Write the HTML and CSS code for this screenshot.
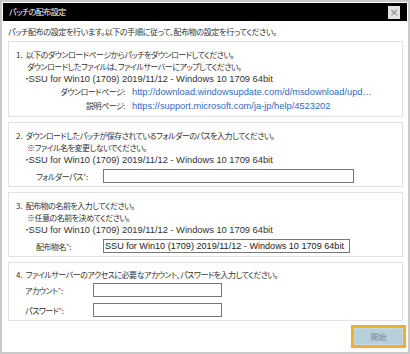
FILE: index.html
```html
<!doctype html>
<html>
<head>
    <title>パッチの配布設定</title>
    <link rel="stylesheet" href="styles.css">
</head>
<body>
    <div class="dialog">
        <div class="title-bar">
            <span>パッチの配布設定</span>
            <span class="close-btn">×</span>
        </div>
        <div class="content">
            <div class="intro">パッチ配布の設定を行います。以下の手順に従って、配布物の設定を行ってください。</div>

            <div class="step">
                <div class="line"><span class="num">1.</span>以下のダウンロードページからパッチをダウンロードしてください。</div>
                <div class="line note">ダウンロードしたファイルは、ファイルサーバーにアップしてください。</div>
                <div class="line item">・<span class="en">SSU for Win10 (1709) 2019/11/12 - Windows 10 1709 64bit</span></div>
                <div class="link-row">
                    <span class="link-label">ダウンロードページ:</span>
                    <a class="en" href="#">http://download.windowsupdate.com/d/msdownload/upd…</a>
                </div>
                <div class="link-row">
                    <span class="link-label">説明ページ:</span>
                    <a class="en" href="#">https://support.microsoft.com/ja-jp/help/4523202</a>
                </div>
            </div>

            <div class="step">
                <div class="line"><span class="num">2.</span>ダウンロードしたパッチが保存されているフォルダーのパスを入力してください。</div>
                <div class="line note">※ファイル名を変更しないでください。</div>
                <div class="line item">・<span class="en">SSU for Win10 (1709) 2019/11/12 - Windows 10 1709 64bit</span></div>
                <div class="field-row">
                    <span class="field-label">フォルダーパス<i>*</i>:</span>
                    <input class="text-input wide" type="text">
                </div>
            </div>

            <div class="step">
                <div class="line"><span class="num">3.</span>配布物の名前を入力してください。</div>
                <div class="line note">※任意の名前を決めてください。</div>
                <div class="line item">・<span class="en">SSU for Win10 (1709) 2019/11/12 - Windows 10 1709 64bit</span></div>
                <div class="field-row">
                    <span class="field-label">配布物名<i>*</i>:</span>
                    <input class="text-input name" type="text" value="SSU for Win10 (1709) 2019/11/12 - Windows 10 1709 64bit">
                </div>
            </div>

            <div class="step last">
                <div class="line"><span class="num">4.</span>ファイルサーバーのアクセスに必要なアカウント、パスワードを入力してください。</div>
                <div class="field-row account">
                    <span class="field-label">アカウント<i>*</i>:</span>
                    <input class="text-input short" type="text">
                </div>
                <div class="field-row account">
                    <span class="field-label">パスワード<i>*</i>:</span>
                    <input class="text-input short" type="password">
                </div>
            </div>

            <div class="footer">
                <button class="start-btn">開始</button>
            </div>
        </div>
    </div>
</body>
</html>
```

FILE: styles.css
```css
body {
    margin: 0;
    font-family: "Noto Sans CJK JP", sans-serif;
    font-size: 8px;
    font-feature-settings: "palt";
    letter-spacing: -0.5px;
    color: #333;
    background-color: #fff;
}
.dialog {
    width: 410px;
    height: 354px;
    box-sizing: border-box;
    border: 2px solid #c9c9c9;
    display: flex;
    flex-direction: column;
}
.title-bar {
    margin: 1px 1px 0;
    height: 18px;
    padding: 0 7px 0 6px;
    background-color: #000;
    color: #fff;
    display: flex;
    align-items: center;
    justify-content: space-between;
    line-height: 18px;
}
.close-btn {
    width: 12px;
    height: 13px;
    background-color: #e2e2e2;
    color: #888;
    font-family: "DejaVu Sans", sans-serif;
    font-size: 11px;
    letter-spacing: 0;
    line-height: 13px;
    text-align: center;
}
.content {
    padding: 0 5px 0 6px;
    flex: 1;
    display: flex;
    flex-direction: column;
}
.intro {
    height: 20px;
    line-height: 21px;
    letter-spacing: -0.35px;
}
.step {
    border: 1px solid #e2e2e2;
    padding: 7px 8px 3px 7px;
    margin-bottom: 5px;
}
.step:first-of-type {
    padding-bottom: 4px;
}
.line {
    height: 12px;
    line-height: 12px;
    white-space: nowrap;
}
.num {
    letter-spacing: 0;
    margin-right: 3px;
}
.note {
    padding-left: 11px;
}
.item {
    padding-left: 9px;
}
.en {
    font-family: "Liberation Sans", sans-serif;
    font-size: 9.3px;
    letter-spacing: 0;
    line-height: 12px;
    vertical-align: top;
}
.link-row {
    display: flex;
    height: 14px;
    line-height: 14px;
}
.link-row .en {
    line-height: 14px;
}
.link-label {
    width: 109px;
    text-align: right;
    margin-right: 7px;
}
.link-row a {
    color: #2f6cc5;
    text-decoration: none;
}
.field-row {
    display: flex;
    align-items: center;
    height: 14px;
    margin-top: 3px;
    padding-left: 20px;
}
.field-label {
    width: 67px;
}
.field-label i {
    font-style: normal;
    color: #e04848;
}
.text-input {
    box-sizing: border-box;
    height: 14px;
    border: 1px solid #777;
    padding: 0 1px;
    margin: 0;
    font-family: "Liberation Sans", sans-serif;
    font-size: 9.1px;
    letter-spacing: 0;
    color: #222;
    outline: none;
}
.wide {
    width: 251px;
}
.name {
    width: 247px;
}
.step.last {
    padding-top: 6px;
}
.account {
    padding-left: 9px;
    margin-top: 2px;
}
.account + .account {
    margin-top: 6px;
}
.account .field-label {
    width: 68px;
}
.short {
    width: 129px;
}
.footer {
    display: flex;
    justify-content: flex-end;
    padding-top: 2px;
}
.start-btn {
    width: 49px;
    height: 17px;
    border: 1px solid #c6d8e3;
    background-color: #b7cedb;
    color: #7a8a94;
    font-family: "Noto Sans CJK JP", sans-serif;
    font-size: 8px;
    padding: 0;
    outline: 3px solid #f5ac2f;
    outline-offset: 0;
}
```
